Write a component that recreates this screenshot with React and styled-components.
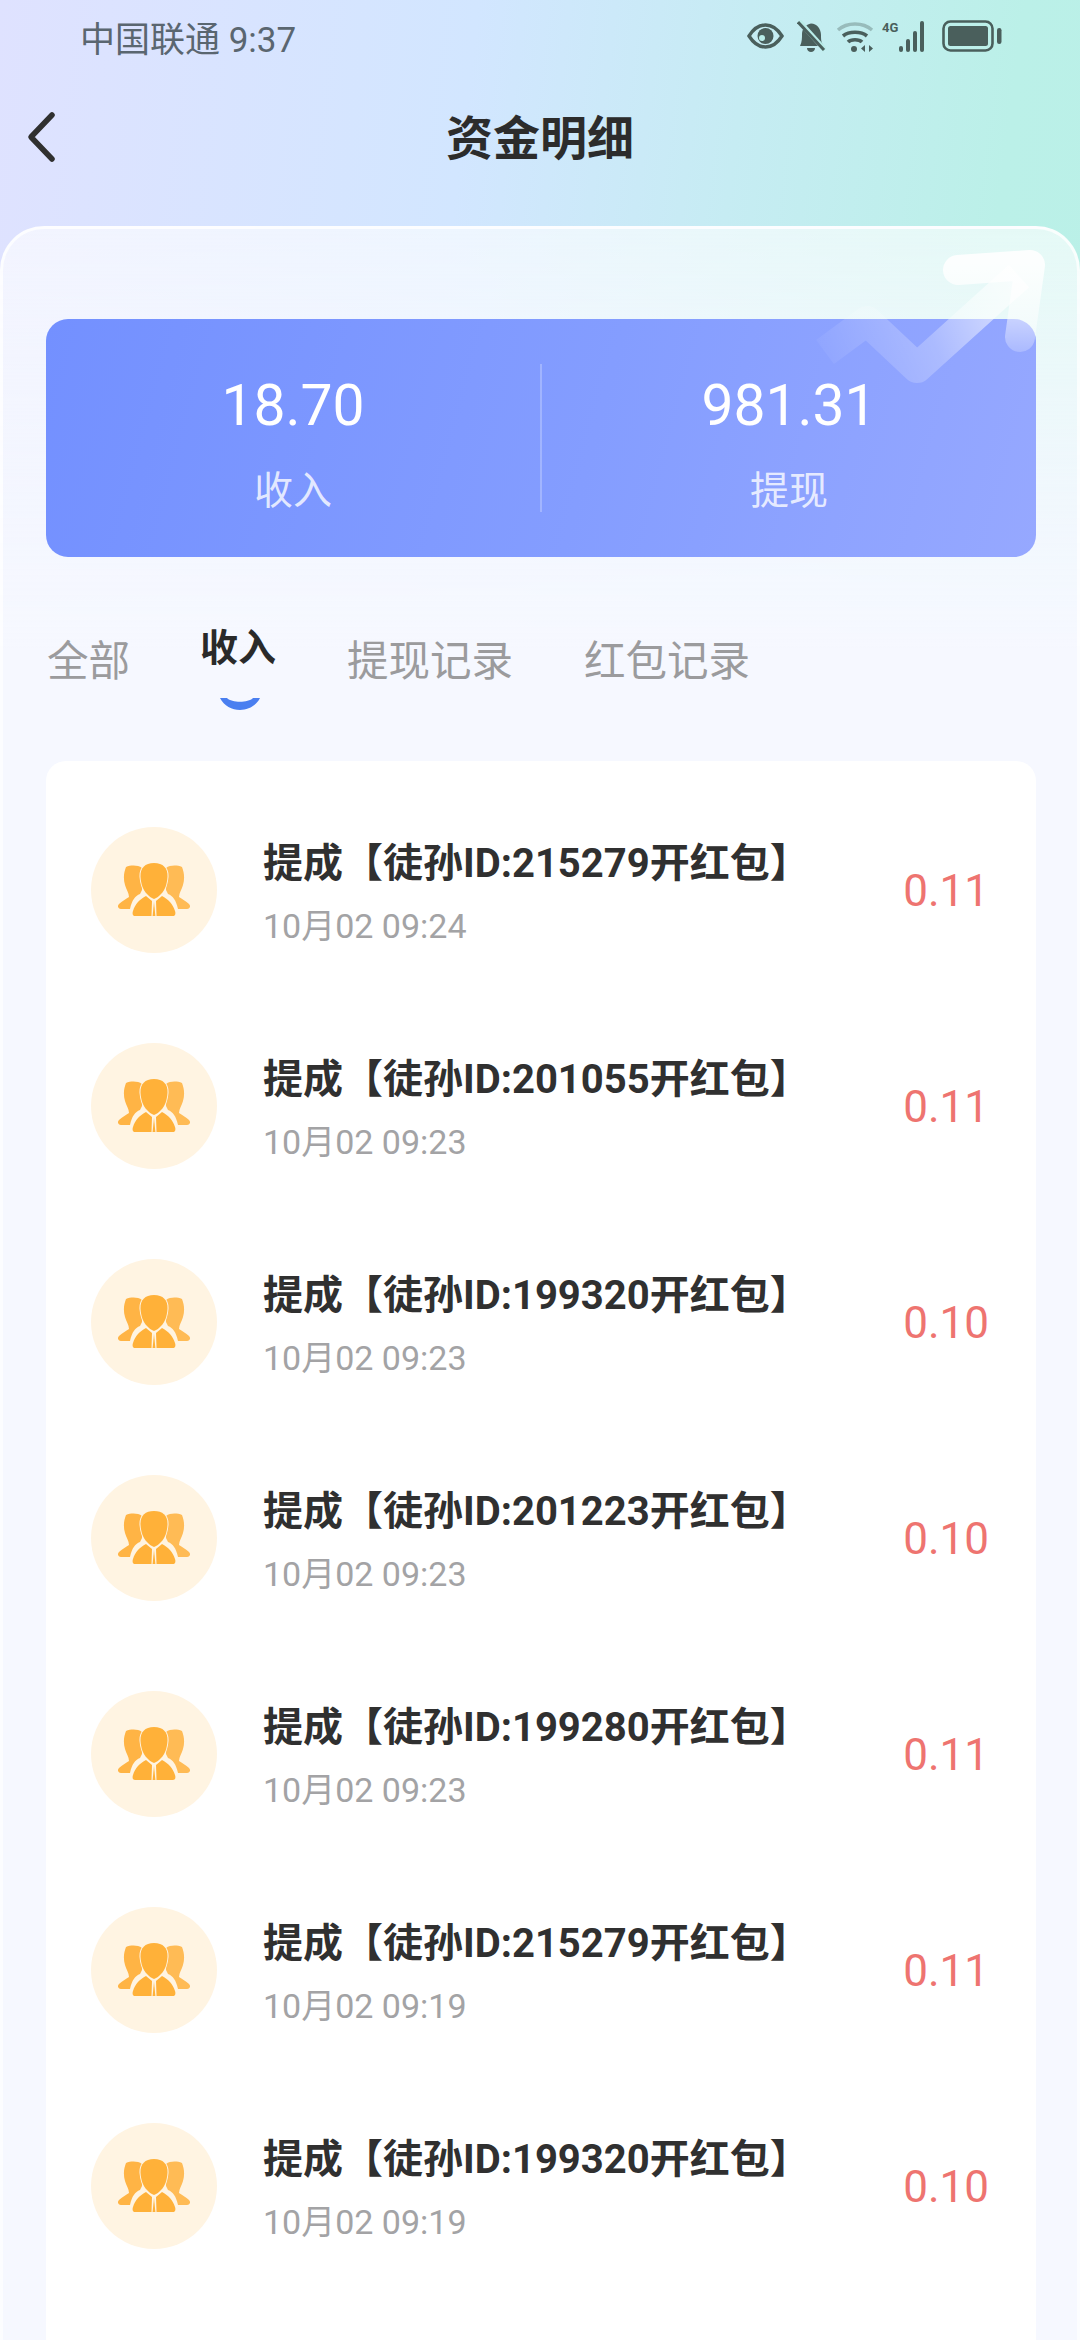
import styled, { createGlobalStyle } from "styled-components"

const GlobalStyle = createGlobalStyle`
  html, body {
    margin: 0;
    padding: 0;
    background: #f6f8ff;
  }
  * {
    box-sizing: border-box;
  }
`

const FONT = `Roboto, "Noto Sans CJK SC", sans-serif`

const Page = styled.div`
  position: relative;
  width: 1080px;
  height: 2340px;
  overflow: hidden;
  font-family: ${FONT};
  background: linear-gradient(97deg, #dfe2ff 0%, #d2e6ff 35%, #c6ecf3 55%, #bbf0e8 75%, #b8f1e6 100%);
`

const StatusBar = styled.div`
  display: flex;
  align-items: center;
  justify-content: space-between;
  height: 72px;
  padding: 0 78px 0 80px;
`

const Carrier = styled.span`
  font-size: 35px;
  color: #5a6670;
`

const StatusIcons = styled.div`
  display: flex;
  align-items: center;
`

const Glyph = styled.svg`
  display: block;
  margin-left: ${(p) => p.$gap || 0}px;
`

const Header = styled.div`
  position: relative;
  display: flex;
  align-items: center;
  justify-content: center;
  height: 128px;
`

const BackButton = styled.svg`
  position: absolute;
  left: 24px;
  top: 38px;
  width: 34px;
  height: 54px;
`

const Title = styled.h1`
  margin: -4px 0 0;
  font-size: 47px;
  font-weight: 700;
  color: #2c2c2c;
`

const Sheet = styled.div`
  position: relative;
  height: 2200px;
  margin-top: 26px;
  padding: 90px 41px 0 46px;
  border: 3px solid rgba(255, 255, 255, 0.75);
  border-bottom: 0;
  border-radius: 44px 44px 0 0;
  background: linear-gradient(180deg, rgba(255, 255, 255, 0.62) 0, rgba(246, 248, 255, 0.9) 260px, #f6f8ff 420px);
`

const ArrowMark = styled.svg`
  position: absolute;
  right: 0;
  top: 0;
  width: 280px;
  height: 200px;
  z-index: 2;
`

const Summary = styled.div`
  display: flex;
  align-items: center;
  height: 238px;
  margin-left: -3px;
  border-radius: 22px;
  background: linear-gradient(105deg, #7390ff 0%, #849dff 55%, #96a8ff 100%);
`

const SummaryCell = styled.div`
  flex: 1;
  display: flex;
  flex-direction: column;
  align-items: center;
  padding-top: 12px;
  color: #fff;
`

const SummaryValue = styled.span`
  font-size: 57px;
  font-weight: 400;
  line-height: 66px;
`

const SummaryLabel = styled.span`
  margin-top: 27px;
  font-size: 39px;
  line-height: 50px;
  color: rgba(255, 255, 255, 0.8);
`

const SummaryDivider = styled.div`
  width: 2px;
  height: 148px;
  background: rgba(255, 255, 255, 0.25);
`

const Tabs = styled.div`
  display: flex;
  align-items: flex-start;
  height: 204px;
  margin-left: -2px;
  padding-top: 76px;
`

const Tab = styled.div`
  position: relative;
  margin-right: ${(p) => p.$gap}px;
  margin-top: ${(p) => (p.$active ? -14 : 0)}px;
  font-size: ${(p) => (p.$active ? 38 : 41.5)}px;
  font-weight: ${(p) => (p.$active ? 700 : 400)};
  line-height: 58px;
  color: ${(p) => (p.$active ? "#2a2a2a" : "#9b9b9d")};
`

const TabMark = styled.svg`
  position: absolute;
  left: 20px;
  top: 79px;
  width: 40px;
  height: 12px;
`

const List = styled.div`
  height: 1600px;
  margin-left: -3px;
  padding-top: 21px;
  border-radius: 20px 20px 0 0;
  background: #fff;
`

const Row = styled.div`
  display: flex;
  align-items: center;
  height: 216px;
  padding: 0 47px 0 45px;
`

const Avatar = styled.div`
  flex: none;
  display: flex;
  align-items: center;
  justify-content: center;
  width: 126px;
  height: 126px;
  border-radius: 50%;
  background: #fff4e2;
`

const RowText = styled.div`
  flex: 1;
  margin: 6px 0 0 46px;
`

const RowTitle = styled.div`
  font-size: 40px;
  font-weight: 700;
  line-height: 48px;
  color: #303030;
`

const RowTime = styled.div`
  margin-top: 17px;
  font-size: 34px;
  line-height: 42px;
  color: #a3a3a5;
`

const Amount = styled.span`
  margin-top: 2px;
  font-size: 44px;
  color: #ee7470;
`

const rows = [
  { id: "215279", time: "10月02 09:24", amount: "0.11" },
  { id: "201055", time: "10月02 09:23", amount: "0.11" },
  { id: "199320", time: "10月02 09:23", amount: "0.10" },
  { id: "201223", time: "10月02 09:23", amount: "0.10" },
  { id: "199280", time: "10月02 09:23", amount: "0.11" },
  { id: "215279", time: "10月02 09:19", amount: "0.11" },
  { id: "199320", time: "10月02 09:19", amount: "0.10" },
]

const tabs = [
  { label: "全部", gap: 70 },
  { label: "收入", gap: 71, active: true },
  { label: "提现记录", gap: 71 },
  { label: "红包记录", gap: 0 },
]

const ICON = "#4a5f5c"

function EyeIcon() {
  return (
    <Glyph width="37" height="26" viewBox="0 0 37 26">
      <path d="M2 13C7 5 12 2 18.5 2S30 5 35 13C30 21 25 24 18.5 24S7 21 2 13Z" fill="none" stroke={ICON} strokeWidth="3.4" />
      <circle cx="18.5" cy="13" r="8" fill={ICON} />
      <circle cx="15" cy="15" r="3" fill="#b9ece8" />
    </Glyph>
  )
}

function BellIcon() {
  return (
    <Glyph $gap={13} width="29" height="32" viewBox="0 0 29 32">
      <path d="M3 26C5 22 5 18 5 14C5 9 9 4 14 3.5C20 3.5 24 9 24 15C24 19 24 23 27 26Z" fill={ICON} />
      <path d="M10 28H18C18 30.5 16 32 14 32S10 30.5 10 28Z" fill={ICON} />
      <path d="M2 1L28 30" stroke="#b9ece8" strokeWidth="5" />
      <path d="M1 2L27 30" stroke={ICON} strokeWidth="3" />
    </Glyph>
  )
}

function WifiIcon() {
  return (
    <Glyph $gap={10} width="38" height="32" viewBox="0 0 38 32">
      <path d="M2 10C11 2 27 2 36 10" fill="none" stroke={ICON} strokeOpacity="0.35" strokeWidth="3.4" />
      <path d="M7 16C13 11 25 11 31 16" fill="none" stroke={ICON} strokeWidth="3.6" />
      <path d="M12 22C15 19 23 19 26 22" fill="none" stroke={ICON} strokeWidth="3.6" />
      <circle cx="18" cy="29" r="3" fill={ICON} />
      <path d="M29 25V32L25 28.5ZM33 25V32L37 28.5Z" fill={ICON} />
    </Glyph>
  )
}

function CellIcon() {
  return (
    <Glyph $gap={8} width="50" height="32" viewBox="0 0 50 32">
      <text x="0" y="12" fontFamily="Roboto, sans-serif" fontSize="13" fontWeight="700" fill={ICON}>4G</text>
      <rect x="17" y="26" width="4" height="6" rx="2" fill={ICON} />
      <rect x="24" y="19" width="4" height="13" rx="2" fill={ICON} />
      <rect x="31" y="11" width="4" height="21" rx="2" fill={ICON} />
      <rect x="38" y="1" width="4" height="31" rx="2" fill={ICON} />
    </Glyph>
  )
}

function BatteryIcon() {
  return (
    <Glyph $gap={10} width="60" height="32" viewBox="0 0 60 32">
      <rect x="1.5" y="1.5" width="49" height="29" rx="7" fill="none" stroke={ICON} strokeWidth="2.6" />
      <rect x="6" y="6" width="40" height="20" rx="2.5" fill={ICON} />
      <rect x="55" y="8" width="4.5" height="16" rx="2.2" fill={ICON} />
    </Glyph>
  )
}

function TeamIcon() {
  const gap = "#fff4e2"
  return (
    <svg width="72" height="54" viewBox="0 0 72 54">
      <path d="M8 4C13 2 20 2 24 5L24 27L22 31C17 33 14 37 12 46H3C0 46 -1 43 1 41C4 38 8 36 11 34C11 30 8 26 7 22C5 15 6 9 8 4Z" fill="#ffb445" />
      <path d="M64 4C59 2 52 2 48 5L48 27L50 31C55 33 58 37 60 46H69C72 46 73 43 71 41C68 38 64 36 61 34C61 30 64 26 65 22C67 15 66 9 64 4Z" fill="#ffbb55" />
      <g fill="#ffb139" stroke={gap} strokeWidth="2" paintOrder="stroke">
        <path d="M28 33L34 38L33.5 53H17C15 53 14 51 15 48C17 41 22 36 28 33Z" />
        <path d="M44 33L38 38L38.5 53H55C57 53 58 51 57 48C55 41 50 36 44 33Z" />
        <path d="M36 0C45 0 50 5 49.5 14C49 21 47 27 43 31C41 33 39 35 36 36C33 35 31 33 29 31C25 27 23 21 22.5 14C22 5 27 0 36 0Z" />
      </g>
      <path d="M36 39L34.6 53H37.4Z" fill="#ffb139" />
    </svg>
  )
}

function App() {
  return (
    <Page>
      <GlobalStyle />
      <StatusBar>
        <Carrier>中国联通 9:37</Carrier>
        <StatusIcons>
          <EyeIcon />
          <BellIcon />
          <WifiIcon />
          <CellIcon />
          <BatteryIcon />
        </StatusIcons>
      </StatusBar>
      <Header>
        <BackButton viewBox="0 0 34 54">
          <path d="M28 5L7 27L28 49" fill="none" stroke="#303030" strokeWidth="5.5" strokeLinecap="round" strokeLinejoin="round" />
        </BackButton>
        <Title>资金明细</Title>
      </Header>
      <Sheet>
        <ArrowMark viewBox="0 0 280 200">
          <defs>
            <linearGradient id="lineFade" gradientUnits="userSpaceOnUse" x1="20" y1="130" x2="230" y2="40">
              <stop offset="0" stopColor="#fff" stopOpacity="0.03" />
              <stop offset="0.5" stopColor="#fff" stopOpacity="0.25" />
              <stop offset="1" stopColor="#fff" stopOpacity="0.75" />
            </linearGradient>
            <linearGradient id="headFade" gradientUnits="userSpaceOnUse" x1="0" y1="30" x2="0" y2="125">
              <stop offset="0" stopColor="#fff" stopOpacity="0.9" />
              <stop offset="0.5" stopColor="#fff" stopOpacity="0.6" />
              <stop offset="1" stopColor="#fff" stopOpacity="0.2" />
            </linearGradient>
          </defs>
          <path d="M28 123L70 92L120 139L222 47" fill="none" stroke="url(#lineFade)" strokeWidth="30" strokeLinejoin="round" />
          <path d="M161 41L233 36L223 108" fill="none" stroke="url(#headFade)" strokeWidth="30" strokeLinecap="round" strokeLinejoin="round" />
        </ArrowMark>
        <Summary>
          <SummaryCell>
            <SummaryValue>18.70</SummaryValue>
            <SummaryLabel>收入</SummaryLabel>
          </SummaryCell>
          <SummaryDivider />
          <SummaryCell>
            <SummaryValue>981.31</SummaryValue>
            <SummaryLabel>提现</SummaryLabel>
          </SummaryCell>
        </Summary>
        <Tabs>
          {tabs.map((tab) => (
            <Tab key={tab.label} $active={tab.active} $gap={tab.gap}>
              {tab.label}
              {tab.active && (
                <TabMark viewBox="0 0 40 12">
                  <path d="M0 0H7C12 5 28 5 33 0H40C36 8 28 12 20 12S4 8 0 0Z" fill="#4a7ff0" />
                </TabMark>
              )}
            </Tab>
          ))}
        </Tabs>
        <List>
          {rows.map((row, i) => (
            <Row key={i}>
              <Avatar>
                <TeamIcon />
              </Avatar>
              <RowText>
                <RowTitle>提成【徒孙ID:{row.id}开红包】</RowTitle>
                <RowTime>{row.time}</RowTime>
              </RowText>
              <Amount>{row.amount}</Amount>
            </Row>
          ))}
        </List>
      </Sheet>
    </Page>
  )
}

export default App
